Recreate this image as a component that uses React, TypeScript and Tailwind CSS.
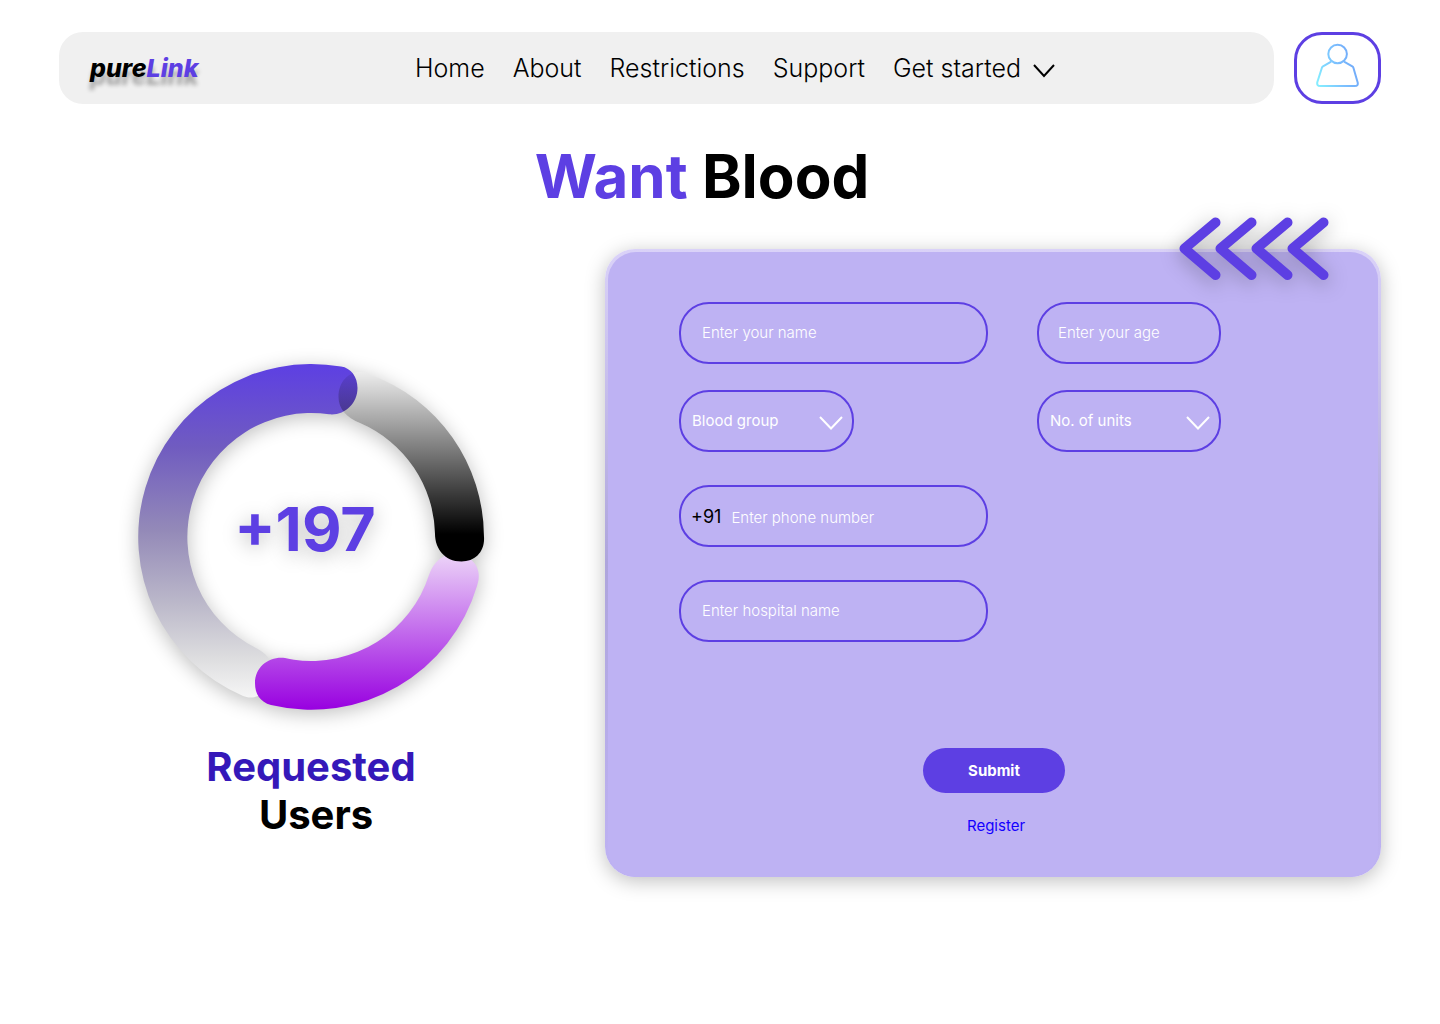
import React from "react";

const navLinks = ["Home", "About", "Restrictions", "Support"];

const fieldClass =
  "h-[62px] w-full rounded-[30px] border-2 border-[#5d3fe3] bg-transparent text-[15px] outline-none";

function TextField({ id, label, padding }: { id: string; label: string; padding: string }) {
  return (
    <input
      id={id}
      type="text"
      aria-label={label}
      placeholder={label}
      className={`${fieldClass} ${padding} pb-[2px] font-light text-white placeholder:text-white`}
    />
  );
}

function SelectField({ id, label, options }: { id: string; label: string; options: string[] }) {
  return (
    <div className="relative">
      <select
        id={id}
        aria-label={label}
        defaultValue=""
        className={`${fieldClass} appearance-none px-[11px] text-white`}
      >
        <option value="">{label}</option>
        {options.map((o) => (
          <option key={o}>{o}</option>
        ))}
      </select>
      <svg
        className="pointer-events-none absolute top-[25px] right-[10px]"
        width="26"
        height="16"
        viewBox="0 0 26 16"
        fill="none"
        stroke="white"
        strokeWidth="2"
      >
        <path d="M2 2 L13 13.5 L24 2" />
      </svg>
    </div>
  );
}

function UserIcon() {
  return (
    <svg width="44" height="46" viewBox="0 0 44 46" fill="none" stroke="url(#userStroke)" strokeWidth="2">
      <defs>
        <linearGradient id="userStroke" gradientUnits="userSpaceOnUse" x1="1" y1="34" x2="42" y2="20">
          <stop offset="0" stopColor="#84ecff" />
          <stop offset="0.5" stopColor="#7cc2ff" />
          <stop offset="1" stopColor="#70a6f8" />
        </linearGradient>
      </defs>
      <circle cx="21.6" cy="11" r="9.3" />
      <path d="M15.2 18.6 L7 23.3 Q6.2 23.8 5.9 24.7 L1.3 39.3 Q0.6 43 4.2 43 L38.8 43 Q42.6 43 41.6 39.3 L37.4 24.7 Q37.1 23.8 36.3 23.3 L28 18.6" />
    </svg>
  );
}

const purpleArc =
  "M105 332 A173 173 0 0 1 203 2.6 C213 4 219.5 13 219.5 24 C219.5 40 206 52 191 50.3 A124 124 0 0 0 118 284 C128 289 134 296 134 306 C134 321 126 333.5 112 333.5 C110 333.5 107 332.8 105 332 Z";
const violetArc =
  "M339 222 A173 173 0 0 1 133 341 C122 338 117 330 117 319 C117 302 132 292 147 294 Q152 295 156 295.8 A124 124 0 0 0 291 211 C296 197 305 190 317 190 C333 190 343 203 340.5 216 Z";
const blackArc =
  "M232 10.4 A173 173 0 0 1 346 173 C347 188 337 197.5 323.5 197.5 C306 197.5 297 184 297 170 A124 124 0 0 0 222 59 C209 54 200.5 45 200.5 33 C200.5 18 210 8 222 8 C226 8 229 9 232 10.4 Z";

function UsersRing() {
  return (
    <svg width="346" height="346" viewBox="0 0 346 346" className="block overflow-visible" aria-hidden="true">
      <defs>
        <linearGradient id="ringPurple" gradientUnits="userSpaceOnUse" x1="0" y1="0" x2="0" y2="334">
          <stop offset="0" stopColor="#5d3fe3" />
          <stop offset="0.25" stopColor="#705cc0" />
          <stop offset="0.5" stopColor="#948ab8" />
          <stop offset="0.72" stopColor="#bcb9ca" />
          <stop offset="0.88" stopColor="#dddddf" />
          <stop offset="1" stopColor="#f6f6f6" />
        </linearGradient>
        <linearGradient id="ringViolet" gradientUnits="userSpaceOnUse" x1="0" y1="190" x2="0" y2="346">
          <stop offset="0" stopColor="#ecd4f8" />
          <stop offset="1" stopColor="#9800e0" />
        </linearGradient>
        <linearGradient id="ringBlack" gradientUnits="userSpaceOnUse" x1="0" y1="8" x2="0" y2="170">
          <stop offset="0" stopColor="#000" stopOpacity="0.07" />
          <stop offset="1" stopColor="#000" />
        </linearGradient>
        <filter id="ringShadow" x="-20%" y="-20%" width="140%" height="140%">
          <feGaussianBlur stdDeviation="10" />
        </filter>
      </defs>
      <g filter="url(#ringShadow)" opacity="0.25" transform="translate(0 4)">
        <path d={purpleArc} />
        <path d={violetArc} />
        <path d={blackArc} />
      </g>
      <path d={blackArc} fill="white" />
      <path d={purpleArc} fill="url(#ringPurple)" />
      <path d={violetArc} fill="url(#ringViolet)" />
      <path d={blackArc} fill="url(#ringBlack)" />
    </svg>
  );
}

function Chevrons() {
  return (
    <svg
      className="absolute -top-[32px] right-[52px] overflow-visible drop-shadow-[0_4px_10px_rgba(0,0,0,0.3)]"
      width="150"
      height="63"
      viewBox="0 0 150 63"
      fill="none"
      stroke="#5d3fe3"
      strokeWidth="10"
      strokeLinecap="round"
      strokeLinejoin="round"
      aria-hidden="true"
    >
      <path d="M36.5 5.5 L5.5 31.5 L36.5 58" />
      <path d="M72.5 5.5 L41.5 31.5 L72.5 58" />
      <path d="M108.5 5.5 L77.5 31.5 L108.5 58" />
      <path d="M144.5 5.5 L113.5 31.5 L144.5 58" />
    </svg>
  );
}

export default function App() {
  return (
    <div className="min-h-screen bg-white px-[59px] pt-8 font-[Inter,sans-serif] text-black">
      <header className="flex gap-5">
        <nav className="flex h-[72px] flex-1 items-center rounded-3xl bg-[#f0f0f0] pt-[2px] pl-[31px]">
          <a
            href="#"
            className="w-[325px] text-[25px] font-extrabold italic [text-shadow:0_8px_4px_rgba(0,0,0,0.3)]"
          >
            pure<span className="text-[#5d3fe3]">Link</span>
          </a>
          <ul className="flex items-center gap-7 text-[25px] font-light">
            {navLinks.map((l) => (
              <li key={l}>
                <a href="#">{l}</a>
              </li>
            ))}
            <li>
              <button type="button" className="flex items-center gap-3 font-light">
                Get started
                <svg className="mt-1" width="22" height="14" viewBox="0 0 22 14" fill="none" stroke="black" strokeWidth="2">
                  <path d="M1 1 L11 12 L21 1" />
                </svg>
              </button>
            </li>
          </ul>
        </nav>
        <button
          type="button"
          aria-label="Profile"
          className="flex h-[72px] w-[87px] justify-center rounded-[28px] border-[3px] border-[#5d3fe3] pt-2"
        >
          <UserIcon />
        </button>
      </header>

      <h1 className="mt-[35px] pr-9 text-center text-[60px] leading-[74px] font-bold">
        <span className="text-[#5d3fe3]">Want</span> Blood
      </h1>

      <main className="mt-9 flex">
        <section className="flex w-[504px] shrink-0 flex-col items-center pt-[115px]">
          <div className="grid place-items-center">
            <div className="col-start-1 row-start-1">
              <UsersRing />
            </div>
            <p className="relative col-start-1 row-start-1 pr-3 pb-4 text-[61px] leading-[74px] font-bold text-[#5d3fe3] [text-shadow:0_4px_20px_rgba(0,0,0,0.25)]">
              +197
            </p>
          </div>
          <h2 className="mt-[33px] text-center text-[40px] leading-12 font-bold">
            <span className="block text-[#3518b9]">Requested</span>
            <span className="block pl-[10px]">Users</span>
          </h2>
        </section>

        <div className="relative ml-[42px] flex-1 rounded-[30px] bg-linear-to-b from-[#dad2f8] via-[#aea5dc] to-[#beb2f3] px-[3px] pt-[3px] shadow-[0_4px_20px_rgba(0,0,0,0.25)]">
          <Chevrons />
          <form className="flex flex-col rounded-[28px] bg-[#beb2f3] px-[71px] pt-[50px] pb-[41px]">
            <div className="grid grid-cols-[309px_184px] gap-x-[49px] gap-y-[26px]">
              <TextField id="name" label="Enter your name" padding="px-[21px]" />
              <TextField id="age" label="Enter your age" padding="px-[19px]" />
              <div className="w-[175px]">
                <SelectField id="group" label="Blood group" options={["A+", "B+", "O+", "AB+"]} />
              </div>
              <SelectField id="units" label="No. of units" options={["1", "2", "3", "4"]} />
            </div>
            <div className="mt-[33px] flex w-[309px] flex-col gap-[33px]">
              <div className={`${fieldClass} flex items-center gap-[10px] px-[10px]`}>
                <label htmlFor="phone" className="text-[18px]">
                  +91
                </label>
                <input
                  id="phone"
                  type="tel"
                  placeholder="Enter phone number"
                  className="min-w-0 flex-1 bg-transparent pt-1 font-light text-white outline-none placeholder:text-white"
                />
              </div>
              <TextField id="hospital" label="Enter hospital name" padding="px-[21px]" />
            </div>
            <div className="mt-[106px] flex flex-col items-center gap-[23px] pl-[2px] text-[15px]">
              <button
                type="submit"
                className="h-[45px] w-[142px] rounded-full bg-[#5d3fe3] pt-px font-bold text-white"
              >
                Submit
              </button>
              <a href="#" className="pl-1 leading-5 text-[#1400ff]">
                Register
              </a>
            </div>
          </form>
        </div>
      </main>
    </div>
  );
}
